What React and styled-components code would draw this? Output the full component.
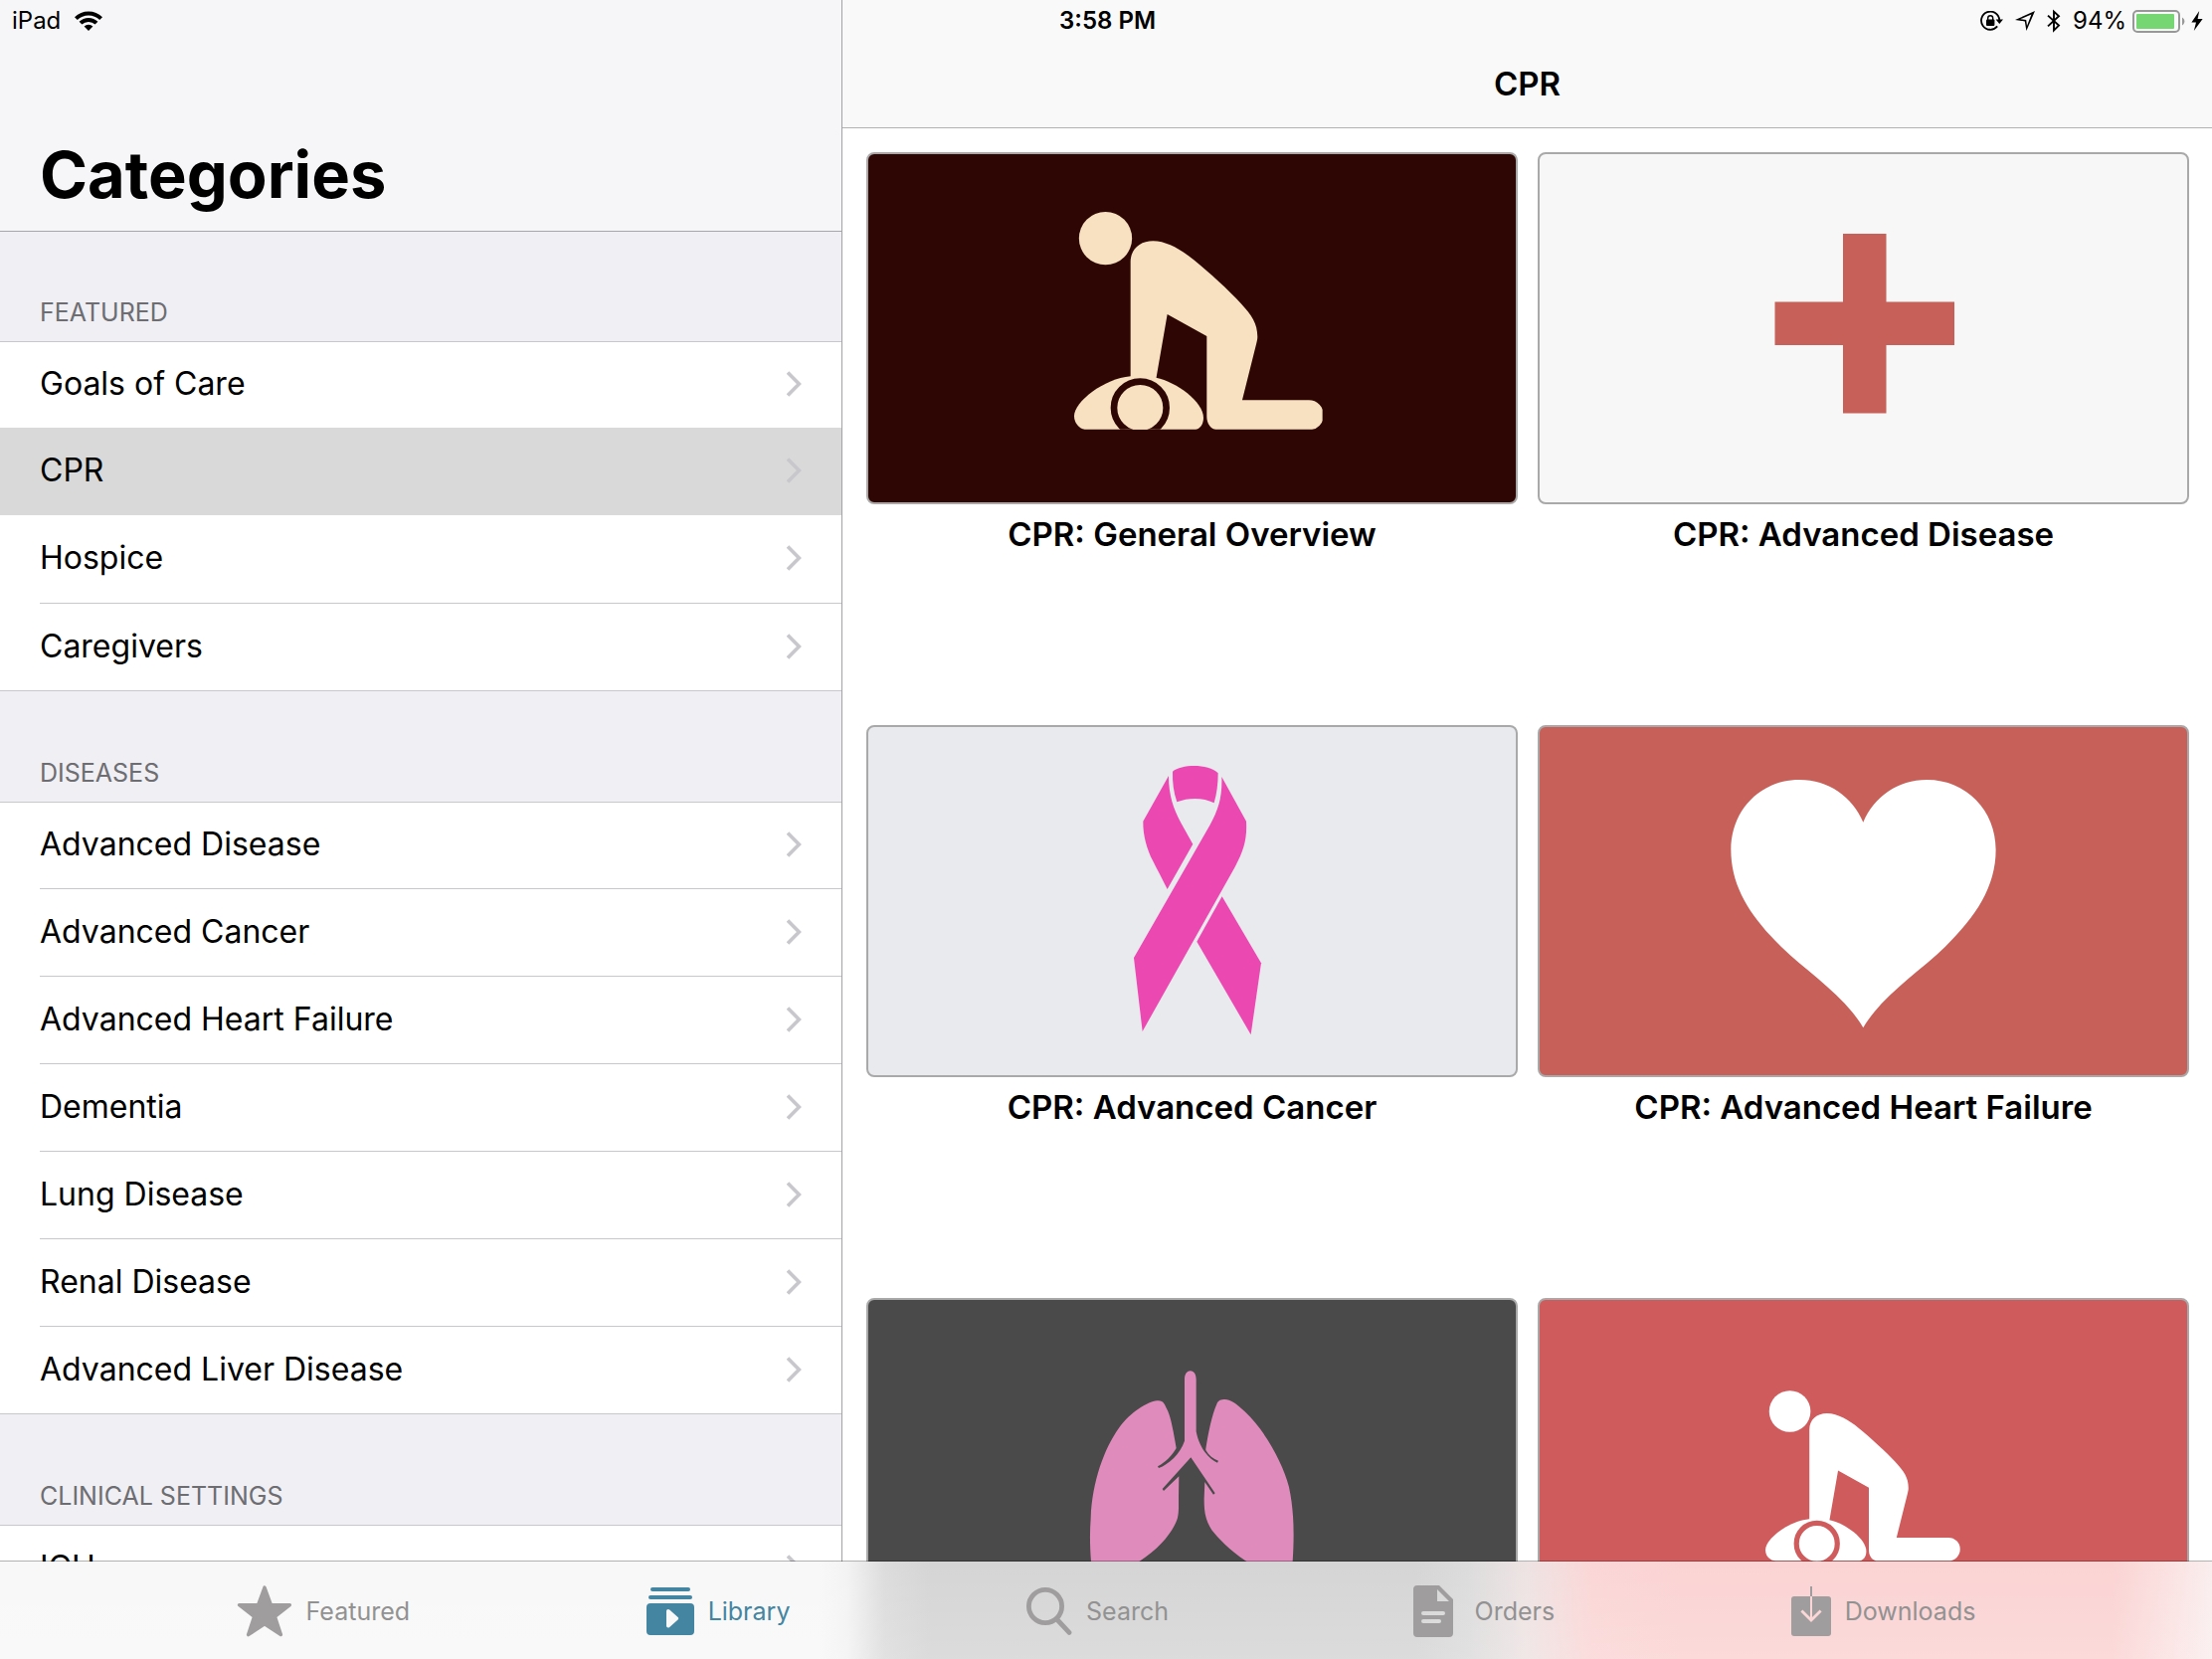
import React from "react";
import styled, { createGlobalStyle } from "styled-components";

const GlobalStyle = createGlobalStyle`
  * { box-sizing: border-box; }
  body {
    margin: 0;
    background: #fff;
    color: #000;
    font-family: Inter, Roboto, "Liberation Sans", sans-serif;
  }
  h1, h2, h3, ul { margin: 0; padding: 0; }
  ul { list-style: none; }
  a { color: inherit; text-decoration: none; }
  svg { display: block; flex: none; }
`;

const Screen = styled.div`
  position: relative;
  display: flex;
  flex-direction: column;
  height: 100vh;
  overflow: hidden;
`;

const SplitView = styled.div`
  display: flex;
  flex: 1;
  min-height: 0;
  overflow: hidden;
`;

/* ---------- status bar ---------- */

const StatusBar = styled.header`
  position: absolute;
  inset: 0 0 auto 0;
  z-index: 2;
  display: grid;
  grid-template-columns: 1fr auto 1fr;
  align-items: center;
  height: 42px;
  padding: 0 9px 0 12px;
  font-size: 24px;
  line-height: 40px;
`;

const StatusGroup = styled.div`
  display: flex;
  align-items: center;
  justify-content: ${(p) => (p.$end ? "flex-end" : "flex-start")};
  gap: ${(p) => p.$gap}px;
`;

const Clock = styled.time`
  font-weight: 600;
`;

/* ---------- sidebar ---------- */

const Sidebar = styled.aside`
  display: flex;
  flex-direction: column;
  flex: 0 1 847px;
  min-width: 0;
  background: #fff;
  border-right: 1px solid #a3a3a6;
`;

const SidebarHeader = styled.div`
  display: flex;
  flex: none;
  align-items: flex-end;
  height: 232px;
  padding: 0 40px 16px;
  background: #f6f6f8;
`;

const LargeTitle = styled.h1`
  font-size: 65px;
  line-height: 80px;
  font-weight: 700;
`;

const SectionTitle = styled.h2`
  display: flex;
  align-items: flex-end;
  height: ${(p) => (p.$first ? 111 : 112)}px;
  padding: 0 40px 13px;
  border-top: 1px solid ${(p) => (p.$first ? "#a7a7ab" : "#c8c7cc")};
  background: #efeff4;
  color: #6d6d72;
  font-size: 25px;
  line-height: 32px;
  font-weight: 400;
  text-transform: uppercase;
`;

const Row = styled.li`
  height: 88px;
  padding-left: 40px;
  background: ${(p) => (p.$selected ? "#d9d9d9" : "#fff")};

  &:first-child {
    height: 87px;
    border-top: 1px solid #c8c7cc;
  }
`;

const RowLink = styled.a`
  display: flex;
  align-items: center;
  justify-content: space-between;
  height: 100%;
  padding: 0 40px 2px 0;
  border-top: ${(p) => (p.$divider ? "1px solid #c8c7cc" : "0")};
  font-size: 32px;
  line-height: 40px;
`;

/* ---------- main pane ---------- */

const Main = styled.main`
  display: flex;
  flex-direction: column;
  flex: 1;
  min-width: 0;
`;

const NavBar = styled.div`
  flex: none;
  height: 129px;
  padding-top: 40px;
  border-bottom: 1px solid #b2b2b2;
  background: #f9f9f9;
  text-align: center;
`;

const NavTitle = styled.h2`
  font-size: 33px;
  line-height: 88px;
  font-weight: 600;
`;

const Grid = styled.div`
  display: grid;
  grid-template-columns: 1fr 1fr;
  grid-auto-rows: 576px;
  column-gap: 20px;
  padding: 24px 23px 0 24px;
`;

const Card = styled.a`
  display: block;
  min-width: 0;
`;

const Poster = styled.div`
  height: 354px;
  border: 2px solid #a9a9a9;
  border-radius: 8px;
  background: ${(p) => p.$color};
  overflow: hidden;

  svg {
    width: 100%;
    height: 100%;
  }
`;

const CardTitle = styled.h3`
  margin-top: 10px;
  font-size: 33px;
  line-height: 40px;
  font-weight: 600;
  text-align: center;
`;

/* ---------- tab bar ---------- */

/* The fill is the frosted tint of the sidebar and of the two poster columns. */
const TabBar = styled.nav`
  position: relative;
  z-index: 1;
  display: flex;
  flex: none;
  align-items: center;
  justify-content: space-evenly;
  height: 99px;
  margin-top: -1px;
  border-top: 1px solid rgba(0, 0, 0, 0.3);
  background:
    linear-gradient(to bottom, rgba(255, 255, 255, 0), rgba(255, 255, 255, 0.16)),
    linear-gradient(
      to right,
      #f8f8f8 37%,
      #f3f3f3 38.3%,
      #dcdcdc 40%,
      #d5d5d5 42%,
      #d5d5d5 64%,
      #dddcdc 66.5%,
      #eee3e3 69%,
      #fbd6d6 72%,
      #fbd3d3 76%,
      #fbd3d3 95.5%,
      #fbe4e4 98.5%,
      #faeeee 100%
    );
  background-clip: padding-box;
`;

const Tab = styled.button`
  display: flex;
  align-items: center;
  gap: 14px;
  padding: 2px 0 0;
  border: 0;
  background: none;
  color: ${(p) => (p.$active ? "#4485a1" : "#929292")};
  font: inherit;
  font-size: 25px;
  line-height: 32px;

  svg {
    color: ${(p) => (p.$active ? "#4485a1" : "#9f9d9d")};
  }
`;

/* ---------- status icons ---------- */

const WifiIcon = () => (
  <svg width="28" height="20" viewBox="0 0 28 20">
    <g fill="none" stroke="#000" strokeWidth="4">
      <path d="M1.4 7.6 A18 18 0 0 1 26.6 7.6" />
      <path d="M6 12.2 A11.4 11.4 0 0 1 22 12.2" />
    </g>
    <path d="M14 20 L9.6 15.6 A6.4 6.4 0 0 1 18.4 15.6 Z" />
  </svg>
);

const LockIcon = () => (
  <svg width="23" height="20" viewBox="0 0 23 20">
    <path d="M17.2 15.4 A9.1 9.1 0 1 1 19.2 9" fill="none" stroke="#000" strokeWidth="1.8" />
    <path d="M15.6 8.6 H23 L19.3 13 Z" />
    <rect x="6" y="8.6" width="8.4" height="6.4" rx="1" />
    <path d="M7.7 9 V7.2 A2.5 2.5 0 0 1 12.7 7.2 V9" fill="none" stroke="#000" strokeWidth="1.4" />
  </svg>
);

const LocationIcon = () => (
  <svg width="20" height="20" viewBox="0 0 20 20">
    <path
      fillRule="evenodd"
      d="M20 0 L11.4 20 L9.8 10.4 L0 9 Z M16.4 3.4 L5.4 8.2 L11.2 9 L12 15 Z"
    />
  </svg>
);

const BluetoothIcon = () => (
  <svg width="14" height="24" viewBox="0 0 14 24">
    <path d="M1 6.6 L12 16.6 L7 21.4 V2.6 L12 7.2 L1 17.4" fill="none" stroke="#000" strokeWidth="1.9" />
  </svg>
);

const BatteryIcon = () => (
  <svg width="53" height="23" viewBox="0 0 53 23">
    <rect x="1" y="1" width="46" height="21" rx="4" fill="none" stroke="#989898" strokeWidth="2" />
    <rect x="4" y="4" width="38" height="15" rx="1" fill="#76d672" />
    <path d="M50 7.6 A5 4.6 0 0 1 50 15.4 Z" fill="#989898" />
  </svg>
);

const BoltIcon = () => (
  <svg width="12" height="20" viewBox="0 0 12 20">
    <path d="M8.2 0 L0.4 11.4 H5 L2.8 20 L11.6 8 H6.6 Z" />
  </svg>
);

const Chevron = () => (
  <svg width="16" height="26" viewBox="0 0 16 26">
    <path d="M2 1.4 L13.4 13 L2 24.6" fill="none" stroke="#c7c7cc" strokeWidth="3.6" />
  </svg>
);

/* ---------- tab icons ---------- */

const StarIcon = () => (
  <svg width="56" height="52" viewBox="0 0 56 52">
    <path
      d="M28 2 L34.4 19.6 H53.4 L38.4 31.4 L44.4 49.6 L28 38.8 L11.6 49.6 L17.6 31.4 L2.6 19.6 H21.6 Z"
      fill="currentColor"
      stroke="currentColor"
      strokeWidth="3.4"
      strokeLinejoin="round"
    />
  </svg>
);

const LibraryIcon = () => (
  <svg width="48" height="48" viewBox="0 0 48 48">
    <g fill="currentColor">
      <rect x="4" y="0" width="40" height="4" rx="2" />
      <rect x="2" y="8" width="44" height="4" rx="2" />
      <path
        fillRule="evenodd"
        d="M4 16 H44 A4 4 0 0 1 48 20 V44 A4 4 0 0 1 44 48 H4 A4 4 0 0 1 0 44 V20 A4 4 0 0 1 4 16 Z M20 24 V38.6 C20 40.6 22 41.2 23.2 39.9 L31.6 32.4 C32.4 31.6 32.4 30.8 31.6 30 L23.2 22.6 C22 21.4 20 22 20 24 Z"
      />
    </g>
  </svg>
);

const SearchIcon = () => (
  <svg width="46" height="48" viewBox="0 0 46 48" fill="none" stroke="currentColor">
    <circle cx="19" cy="19" r="16.6" strokeWidth="4.8" />
    <path d="M31 32.5 L43 45.4" strokeWidth="4.8" strokeLinecap="round" />
  </svg>
);

const OrdersIcon = () => (
  <svg width="56" height="52" viewBox="-8 0 56 52">
    <path
      fillRule="evenodd"
      fill="currentColor"
      d="M4 0 H26 L40 14 V48 A4 4 0 0 1 36 52 H4 A4 4 0 0 1 0 48 V4 A4 4 0 0 1 4 0 Z M24 4 V16 H36 Z M10 26 A2 2 0 0 0 10 30 H30 A2 2 0 0 0 30 26 Z M10 34 A2 2 0 0 0 10 38 H26 A2 2 0 0 0 26 34 Z"
    />
  </svg>
);

const DownloadsIcon = () => (
  <svg width="40" height="50" viewBox="0 0 40 50">
    <path
      fillRule="evenodd"
      fill="currentColor"
      d="M19 0 H21 V10 H37 A3 3 0 0 1 40 13 V47 A3 3 0 0 1 37 50 H3 A3 3 0 0 1 0 47 V13 A3 3 0 0 1 3 10 H19 Z M19 10 V31 L11.4 23.4 L9.4 25.4 L20 36 L30.6 25.4 L28.6 23.4 L21 31 V10 Z"
    />
  </svg>
);

/* ---------- poster artwork ---------- */

const Artwork = ({ children }) => (
  <svg viewBox="2 2 651 350" aria-hidden="true">
    {children}
  </svg>
);

const CprFigure = ({ fill, ring }) => (
  <g fill={fill}>
    <circle cx="214.5" cy="179" r="80" />
    <path d="M290 600 V250 C290 212 318 187 358 187 C400 187 445 215 480 243 C530 284 585 334 622 374 C656 411 673 435 673 475 C673 483 672 487 670 495 L627 667 H828 A45 45 0 0 1 828 757 H555 C535 757 520 740 520 716 V474 L401 408 L367 604 Z" />
    <path d="M290 595 C210 602 120 672 120 715 C120 738 138 757 160 757 H478 C498 757 510 742 510 720 C510 672 430 612 367 599 Z" />
    <circle cx="319" cy="690" r="79" stroke={ring} strokeWidth="20" />
  </g>
);

const CprArt = () => (
  <Artwork>
    <clipPath id="cprFrame">
      <rect x="120" y="90" width="749" height="665" />
    </clipPath>
    <g transform="translate(169 27) scale(0.3333)" clipPath="url(#cprFrame)">
      <CprFigure fill="#f7e1c0" ring="#2e0604" />
    </g>
  </Artwork>
);

const CprRedArt = () => (
  <Artwork>
    <g transform="translate(197.8 67.5) scale(0.26)">
      <CprFigure fill="#fff" ring="#d05b5c" />
    </g>
  </Artwork>
);

const CrossArt = () => (
  <Artwork>
    <path fill="#c66059" d="M307 82 h43.5 v68.5 h68.5 v43.5 h-68.5 v68.5 h-43.5 v-68.5 h-68.5 v-43.5 h68.5 Z" />
  </Artwork>
);

const RibbonArt = () => (
  <Artwork>
    <g fill="#ec48b2" transform="translate(229 11) scale(0.3333)">
      <path d="M237 107 C265 84 345 83 374 112 C374 145 370 175 362 202 C330 185 285 185 250 199 C240 170 236 140 237 107 Z" />
      <path d="M225 120 L148 257 C147 300 160 343 177 376 C190 402 205 430 221 462 L298 326 L262 262 C240 220 225 180 225 120 Z" />
      <path d="M385 123 L459 257 C462 310 452 345 425 395 L146 891 L120 669 L350 268 C375 222 387 185 385 123 Z" />
      <path d="M386 484 L504 685 L473 901 L310 620 Z" />
    </g>
  </Artwork>
);

const HeartArt = () => (
  <Artwork>
    <path
      fill="#fff"
      transform="translate(154 11) scale(0.3333)"
      d="M520 260 C488 183 415 132 328 132 C208 132 121 225 121 343 C121 455 180 545 273 636 C355 715 465 785 520 880 C575 785 685 715 767 636 C860 545 920 455 920 343 C920 225 832 132 712 132 C625 132 552 183 520 260 Z"
    />
  </Artwork>
);

const LungsArt = () => (
  <Artwork>
    <path
      fill="#df8bbb"
      transform="translate(189 35) scale(0.3333)"
      d="M393 140 C393 106 428 106 428 140 V298 C433 325 445 348 455 361 C466 376 480 387 492 392 L495 386 C480 381 466 370 457 354 V350 C465 300 475 250 490 215 C495 203 503 201 515 201 C530 201 550 213 575 238 C640 300 690 395 708 465 C722 530 725 600 719 690 C718 760 700 780 665 745 C640 722 610 708 577 688 C530 658 490 615 475 595 C455 562 452 540 452 500 L454 450 L480 488 L485 484 L412 376 L326 471 L330 477 L376 433 L375 500 C375 540 377 555 362 582 C345 615 310 655 256 690 C220 712 190 722 165 745 C130 775 112 760 111 690 C107 640 107 600 110 560 C114 450 150 350 195 287 C230 240 280 208 310 205 C330 203 332 215 343 237 C352 258 360 300 368 348 C355 371 335 391 312 403 L315 408 C345 397 380 365 393 326 Z"
    />
  </Artwork>
);

/* ---------- content ---------- */

const sections = [
  { title: "Featured", rows: ["Goals of Care", "CPR", "Hospice", "Caregivers"] },
  {
    title: "Diseases",
    rows: [
      "Advanced Disease",
      "Advanced Cancer",
      "Advanced Heart Failure",
      "Dementia",
      "Lung Disease",
      "Renal Disease",
      "Advanced Liver Disease",
    ],
  },
  { title: "Clinical Settings", rows: ["ICU"] },
];

const selectedRow = "CPR";

const cards = [
  { title: "CPR: General Overview", color: "#2e0604", Art: CprArt },
  { title: "CPR: Advanced Disease", color: "#f7f7f7", Art: CrossArt },
  { title: "CPR: Advanced Cancer", color: "#e8eaee", Art: RibbonArt },
  { title: "CPR: Advanced Heart Failure", color: "#c66059", Art: HeartArt },
  { color: "#4a4a4a", Art: LungsArt },
  { color: "#d05b5c", Art: CprRedArt },
];

const tabs = [
  { label: "Featured", Icon: StarIcon },
  { label: "Library", Icon: LibraryIcon, active: true },
  { label: "Search", Icon: SearchIcon },
  { label: "Orders", Icon: OrdersIcon },
  { label: "Downloads", Icon: DownloadsIcon },
];

export default function App() {
  return (
    <Screen>
      <GlobalStyle />
      <StatusBar>
        <StatusGroup $gap={14}>
          <span>iPad</span>
          <WifiIcon />
        </StatusGroup>
        <Clock>3:58 PM</Clock>
        <StatusGroup $end $gap={12}>
          <LockIcon />
          <LocationIcon />
          <BluetoothIcon />
          <StatusGroup $gap={6}>
            <span>94%</span>
            <BatteryIcon />
            <BoltIcon />
          </StatusGroup>
        </StatusGroup>
      </StatusBar>

      <SplitView>
        <Sidebar>
          <SidebarHeader>
            <LargeTitle>Categories</LargeTitle>
          </SidebarHeader>
          {sections.map((section, s) => (
            <section key={section.title}>
              <SectionTitle $first={s === 0}>{section.title}</SectionTitle>
              <ul>
                {section.rows.map((row, i) => (
                  <Row key={row} $selected={row === selectedRow}>
                    <RowLink
                      href="#"
                      aria-current={row === selectedRow ? "page" : undefined}
                      $divider={i > 0 && row !== selectedRow && section.rows[i - 1] !== selectedRow}
                    >
                      {row}
                      <Chevron />
                    </RowLink>
                  </Row>
                ))}
              </ul>
            </section>
          ))}
        </Sidebar>

        <Main>
          <NavBar>
            <NavTitle>CPR</NavTitle>
          </NavBar>
          <Grid>
            {cards.map(({ title, color, Art }, i) => (
              <Card href="#" key={i}>
                <Poster $color={color}>
                  <Art />
                </Poster>
                {title && <CardTitle>{title}</CardTitle>}
              </Card>
            ))}
          </Grid>
        </Main>
      </SplitView>

      <TabBar>
        {tabs.map(({ label, Icon, active }) => (
          <Tab type="button" key={label} $active={active}>
            <Icon />
            {label}
          </Tab>
        ))}
      </TabBar>
    </Screen>
  );
}
